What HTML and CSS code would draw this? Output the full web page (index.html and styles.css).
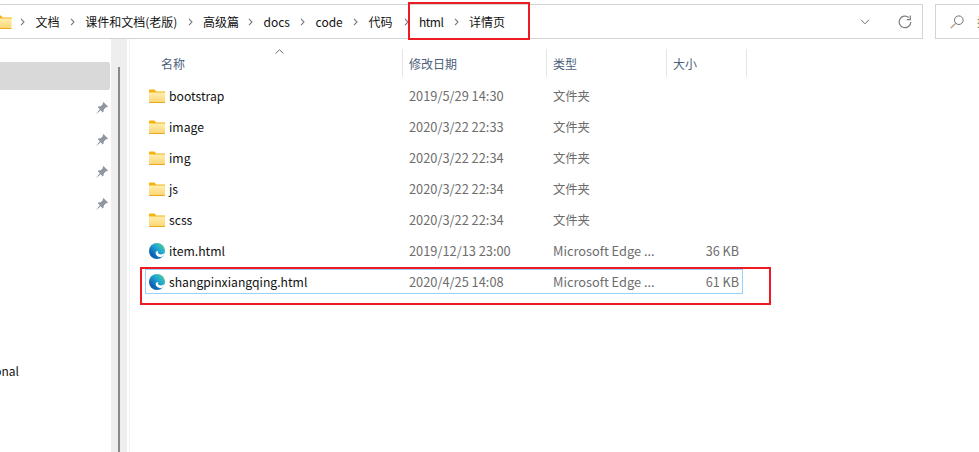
FILE: index.html
```html
<!DOCTYPE html>
<html lang="zh-CN">
<head>
    <meta charset="UTF-8">
    <title>详情页</title>
    <link rel="stylesheet" href="styles.css">
</head>
<body>
    <svg class="defs" width="0" height="0">
        <defs>
            <linearGradient id="edge-fill" x1="1" y1="0" x2="0" y2="1">
                <stop offset="0" stop-color="#5fd67e"/>
                <stop offset=".4" stop-color="#20a8d2"/>
                <stop offset=".75" stop-color="#0d63b5"/>
                <stop offset="1" stop-color="#0a4d92"/>
            </linearGradient>
            <linearGradient id="folder-fill" x1="0" y1="0" x2="0" y2="1">
                <stop offset="0" stop-color="#ffeeb0"/>
                <stop offset="1" stop-color="#fbd46f"/>
            </linearGradient>
            <symbol id="folder" viewBox="0 0 16 16">
                <path d="M0 2.500C0 2 .4 1.500 1 1.500h4.500L7 3.500H16V6H0z" fill="#f5b30e"/>
                <path d="M0 4.500h15.500c.3 0 .5.200.5.500v9c0 .6-.4 1-1 1H1c-.6 0-1-.4-1-1z" fill="url(#folder-fill)"/>
                <path d="M0 14h16c0 .6-.4 1-1 1H1c-.6 0-1-.4-1-1z" fill="#e9a820"/>
            </symbol>
            <symbol id="edge" viewBox="0 0 16 16">
                <circle cx="8" cy="8" r="8" fill="url(#edge-fill)"/>
                <path d="M16 9.800C13.500 12 10 11.800 9 10 8.500 9 9 8.500 9.500 8 7.500 7.800 6.500 9 6.700 10.500 7 13 10 14.500 12.500 14 14 13.500 15.500 12 16 9.800z" fill="#fff"/>
            </symbol>
            <symbol id="pin" viewBox="0 0 12 12">
                <path d="M7.500 0 12 4.500 11 5.500 10.200 5 7.800 7.400 7.600 9.600 6.800 10.400 1.800 5.300 2.500 4.500 4.700 4.300 7 1.900 6.600 1z" fill="#8f979e"/>
                <path d="M3.600 7.400 0 12l4.600-3.600z" fill="#8f979e"/>
            </symbol>
            <symbol id="crumb-sep" viewBox="0 0 5 8">
                <path d="M1 .8 4 4 1 7.200" fill="none" stroke="#7a7a7a" stroke-width="1.100"/>
            </symbol>
        </defs>
    </svg>

    <div class="toolbar">
        <div class="address">
            <svg class="crumb-folder"><use href="#folder"/></svg>
            <svg class="sep"><use href="#crumb-sep"/></svg>
            <span>文档</span>
            <svg class="sep"><use href="#crumb-sep"/></svg>
            <span>课件和文档(老版)</span>
            <svg class="sep"><use href="#crumb-sep"/></svg>
            <span class="crumb-short">高级篇</span>
            <svg class="sep"><use href="#crumb-sep"/></svg>
            <span>docs</span>
            <svg class="sep"><use href="#crumb-sep"/></svg>
            <span>code</span>
            <svg class="sep"><use href="#crumb-sep"/></svg>
            <span class="crumb-wide">代码</span>
            <svg class="sep"><use href="#crumb-sep"/></svg>
            <span class="crumb-html">html</span>
            <svg class="sep"><use href="#crumb-sep"/></svg>
            <span>详情页</span>
            <svg class="chevron" viewBox="0 0 10 6" width="10" height="6">
                <path d="M1 .8 5 4.800 9 .8" fill="none" stroke="#6f6f6f" stroke-width="1"/>
            </svg>
            <svg class="refresh" viewBox="0 0 14 14" width="14" height="14">
                <path d="M10.800 2.500A5.800 5.800 0 1 0 12.800 7" fill="none" stroke="#7c7c7c" stroke-width="1.200"/>
                <path d="M12.300.5v4.200H8.800" fill="none" stroke="#7c7c7c" stroke-width="1.200"/>
            </svg>
        </div>
        <div class="search">
            <svg viewBox="0 0 14 14" width="14" height="14">
                <circle cx="8.800" cy="5.200" r="4.300" fill="none" stroke="#707070" stroke-width="1"/>
                <path d="M5.600 8.400.8 13.200" stroke="#b4896f" stroke-width="1.200"/>
            </svg>
            <span>搜索</span>
        </div>
    </div>

    <div class="content">
        <aside class="sidebar">
            <div class="nav-current"></div>
            <div class="nav-pin"><svg><use href="#pin"/></svg></div>
            <div class="nav-pin"><svg><use href="#pin"/></svg></div>
            <div class="nav-pin"><svg><use href="#pin"/></svg></div>
            <div class="nav-pin"><svg><use href="#pin"/></svg></div>
            <div class="nav-clip"><span>Personal</span></div>
        </aside>
        <div class="scrollbar"><div class="thumb"></div></div>

        <main class="files">
            <div class="sort-caret">
                <svg viewBox="0 0 9 5" width="9" height="5"><path d="M.5 4.500 4.500.8 8.500 4.500" fill="none" stroke="#6f6f6f"/></svg>
            </div>
            <div class="head">
                <div class="col col-name">名称</div>
                <div class="col">修改日期</div>
                <div class="col">类型</div>
                <div class="col">大小</div>
            </div>

            <div class="row">
                <div class="name"><svg><use href="#folder"/></svg>bootstrap</div>
                <div class="cell">2019/5/29 14:30</div>
                <div class="cell cell-zh">文件夹</div>
                <div class="cell size"></div>
            </div>
            <div class="row">
                <div class="name"><svg><use href="#folder"/></svg>image</div>
                <div class="cell">2020/3/22 22:33</div>
                <div class="cell cell-zh">文件夹</div>
                <div class="cell size"></div>
            </div>
            <div class="row">
                <div class="name"><svg><use href="#folder"/></svg>img</div>
                <div class="cell">2020/3/22 22:34</div>
                <div class="cell cell-zh">文件夹</div>
                <div class="cell size"></div>
            </div>
            <div class="row">
                <div class="name"><svg><use href="#folder"/></svg>js</div>
                <div class="cell">2020/3/22 22:34</div>
                <div class="cell cell-zh">文件夹</div>
                <div class="cell size"></div>
            </div>
            <div class="row">
                <div class="name"><svg><use href="#folder"/></svg>scss</div>
                <div class="cell">2020/3/22 22:34</div>
                <div class="cell cell-zh">文件夹</div>
                <div class="cell size"></div>
            </div>
            <div class="row">
                <div class="name"><svg><use href="#edge"/></svg>item.html</div>
                <div class="cell">2019/12/13 23:00</div>
                <div class="cell">Microsoft Edge ...</div>
                <div class="cell size">36 KB</div>
            </div>
            <div class="row row-focus">
                <div class="name"><svg><use href="#edge"/></svg>shangpinxiangqing.html</div>
                <div class="cell">2020/4/25 14:08</div>
                <div class="cell">Microsoft Edge ...</div>
                <div class="cell size">61 KB</div>
            </div>
        </main>
    </div>

    <!-- 红色标注框 -->
    <div class="mark mark-path"></div>
    <div class="mark mark-file"></div>
</body>
</html>
```

FILE: styles.css
```css
* {
    box-sizing: border-box;
}

body {
    margin: 0;
    width: 979px;
    height: 452px;
    overflow: hidden;
    position: relative;
    background-color: #fff;
    color: #111;
    font-family: "Noto Sans CJK SC", "Noto Sans", sans-serif;
    font-size: 12px;
}

.defs {
    position: absolute;
}

/* 地址栏 */
.toolbar {
    display: flex;
    gap: 12px;
    height: 39px;
    padding-top: 4px;
}

.address {
    flex: 0 0 928px;
    margin-left: -5px;
    display: flex;
    align-items: center;
    gap: 9px;
    border: 1px solid #d4d4d4;
    border-left: none;
    white-space: nowrap;
}

.crumb-folder {
    width: 17px;
    height: 16px;
    flex: none;
    margin-right: -2px;
}

.sep {
    width: 5px;
    height: 8px;
    flex: none;
    margin: 0 1.3px;
}

.crumb-short {
    margin-right: -1px;
}

.crumb-wide {
    margin-right: 1px;
}

.crumb-html {
    letter-spacing: -.5px;
}

.chevron {
    margin-left: auto;
    margin-right: 19px;
}

.refresh {
    margin-right: 10px;
}

.search {
    flex: 1;
    display: flex;
    align-items: center;
    gap: 13px;
    padding-left: 14px;
    border: 1px solid #d4d4d4;
    border-right: none;
    overflow: hidden;
    white-space: nowrap;
    color: #6d6d6d;
}

.search svg {
    flex: none;
}

/* 左侧导航 */
.content {
    display: flex;
    height: 413px;
}

.sidebar {
    width: 111px;
    flex: none;
    padding-top: 23px;
}

.nav-current {
    height: 28px;
    margin-right: 1px;
    margin-bottom: 2px;
    background-color: #d9d9d9;
    border-radius: 0 2px 2px 0;
}

.nav-pin {
    display: flex;
    justify-content: flex-end;
    align-items: center;
    height: 32px;
    padding-right: 3px;
}

.nav-pin svg {
    width: 12px;
    height: 12px;
}

.nav-clip {
    width: 19px;
    margin-top: 142px;
    display: flex;
    justify-content: flex-end;
    overflow: hidden;
    line-height: 18px;
}

.scrollbar {
    width: 16px;
    flex: none;
    padding: 28px 7px 0;
    background-color: #eee;
}

.thumb {
    height: 100%;
    background-color: #8a8a8a;
}

/* 文件列表 */
.files {
    flex: 1;
    position: relative;
    margin-left: 2px;
    padding-left: 15px;
    border-left: 1px solid #f2f2f2;
}

.sort-caret {
    position: absolute;
    left: 145px;
    top: 10px;
    line-height: 0;
}

.head {
    display: grid;
    grid-template-columns: 258px 144px 120px 80px;
    height: 28px;
    margin-top: 10px;
    margin-bottom: 6px;
    color: #4d6079;
}

.col {
    display: flex;
    align-items: center;
    padding-left: 6px;
    border-right: 1px solid #e5e5e5;
}

.col-name {
    padding-left: 16px;
}

.row {
    display: grid;
    grid-template-columns: 257px 144px 120px 76px;
    align-items: center;
    width: 598px;
    height: 25px;
    margin-bottom: 6px;
    border: 1px solid transparent;
}

.row-focus {
    border-color: #99d1ff;
}

.name {
    display: flex;
    align-items: center;
    gap: 4px;
    padding-left: 3px;
    white-space: nowrap;
    font-size: 12.2px;
}

.name svg {
    width: 16px;
    height: 16px;
    flex: none;
}

.cell {
    padding-left: 6px;
    color: #6d6d6d;
    white-space: nowrap;
    font-size: 12.8px;
}

.cell-zh {
    font-size: 12.3px;
}

.size {
    text-align: right;
    padding-right: 4px;
    font-size: 12.6px;
}

/* 标注 */
.mark {
    position: absolute;
    border: 2px solid #ed1c24;
}

.mark-path {
    left: 408px;
    top: 2px;
    width: 122px;
    height: 38px;
}

.mark-file {
    left: 140px;
    top: 267px;
    width: 631px;
    height: 38px;
}
```
